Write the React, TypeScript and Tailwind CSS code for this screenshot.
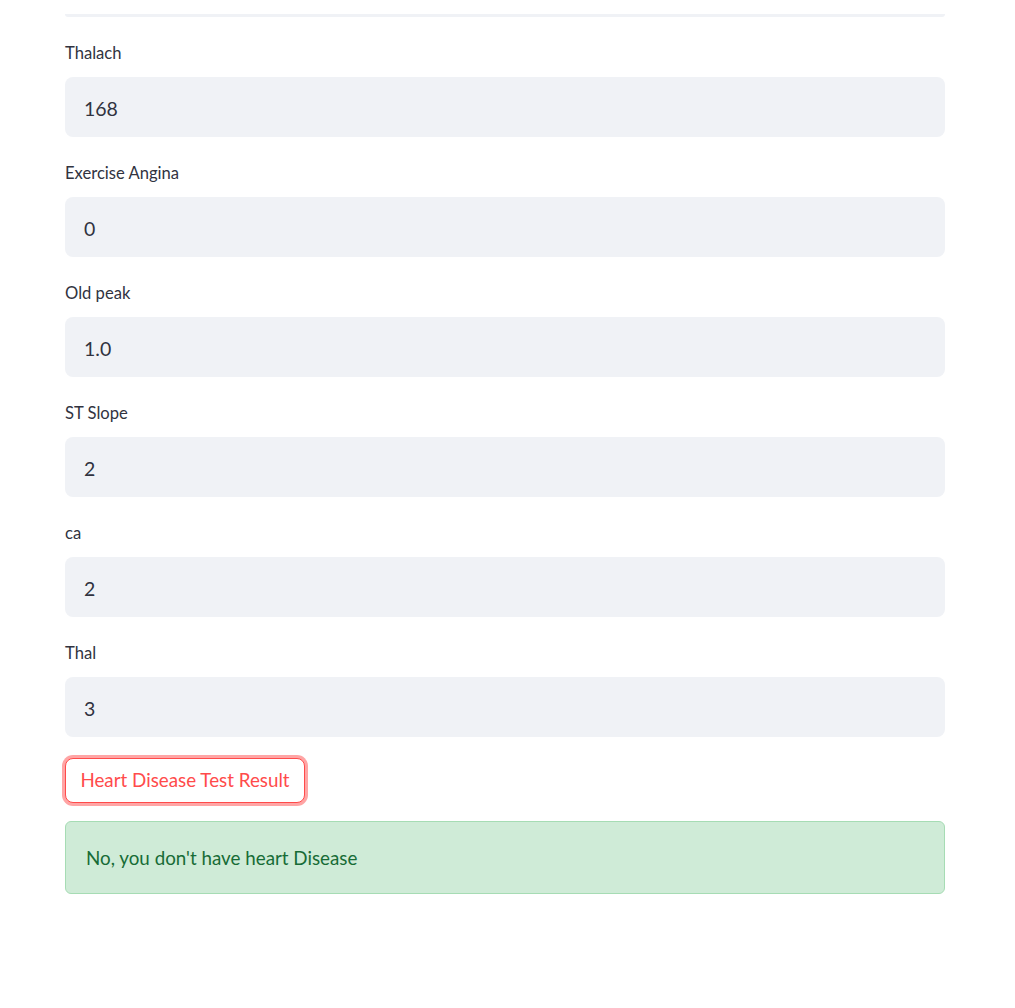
import React from 'react';

const fields = [
  { label: 'Thalach', value: '168' },
  { label: 'Exercise Angina', value: '0' },
  { label: 'Old peak', value: '1.0' },
  { label: 'ST Slope', value: '2' },
  { label: 'ca', value: '2' },
  { label: 'Thal', value: '3' },
];

export default function App() {
  return (
    <div
      className="min-h-[1008px] w-full bg-white text-[#31333f]"
      style={{ fontFamily: 'Lato, "Open Sans", sans-serif' }}
    >
      <div className="mx-[65px] w-[880px]">
        {/* tail of the input above, mostly scrolled away */}
        <div className="h-[17px] pt-[14px]">
          <div className="h-[3px] rounded-b-md bg-[#f0f2f6]" />
        </div>

        {fields.map((f) => (
          <div key={f.label} className="pt-[23px]">
            <label className="block h-[24px] pt-[1px] text-[16.6px] leading-[24px]">{f.label}</label>
            <div className="mt-[13px] flex h-[60px] items-center rounded-lg bg-[#f0f2f6] px-[19px] pt-[3px] text-[19.5px]">
              {f.value}
            </div>
          </div>
        ))}

        <div className="pt-[21px]">
          <button className="h-[45px] w-[240px] rounded-lg border border-[#ff4b4b] bg-white text-[18.8px] text-[#ff4b4b] ring-[3px] ring-[#ff4b4b]/50">
            Heart Disease Test Result
          </button>
        </div>

        <div className="mt-[18px] flex h-[73px] items-center rounded-md border border-[#a6dcb4] bg-[#cfebd7] px-[20px] pt-[2px] text-[18.8px] text-[#176c36]">
          No, you don't have heart Disease
        </div>
      </div>
    </div>
  );
}
